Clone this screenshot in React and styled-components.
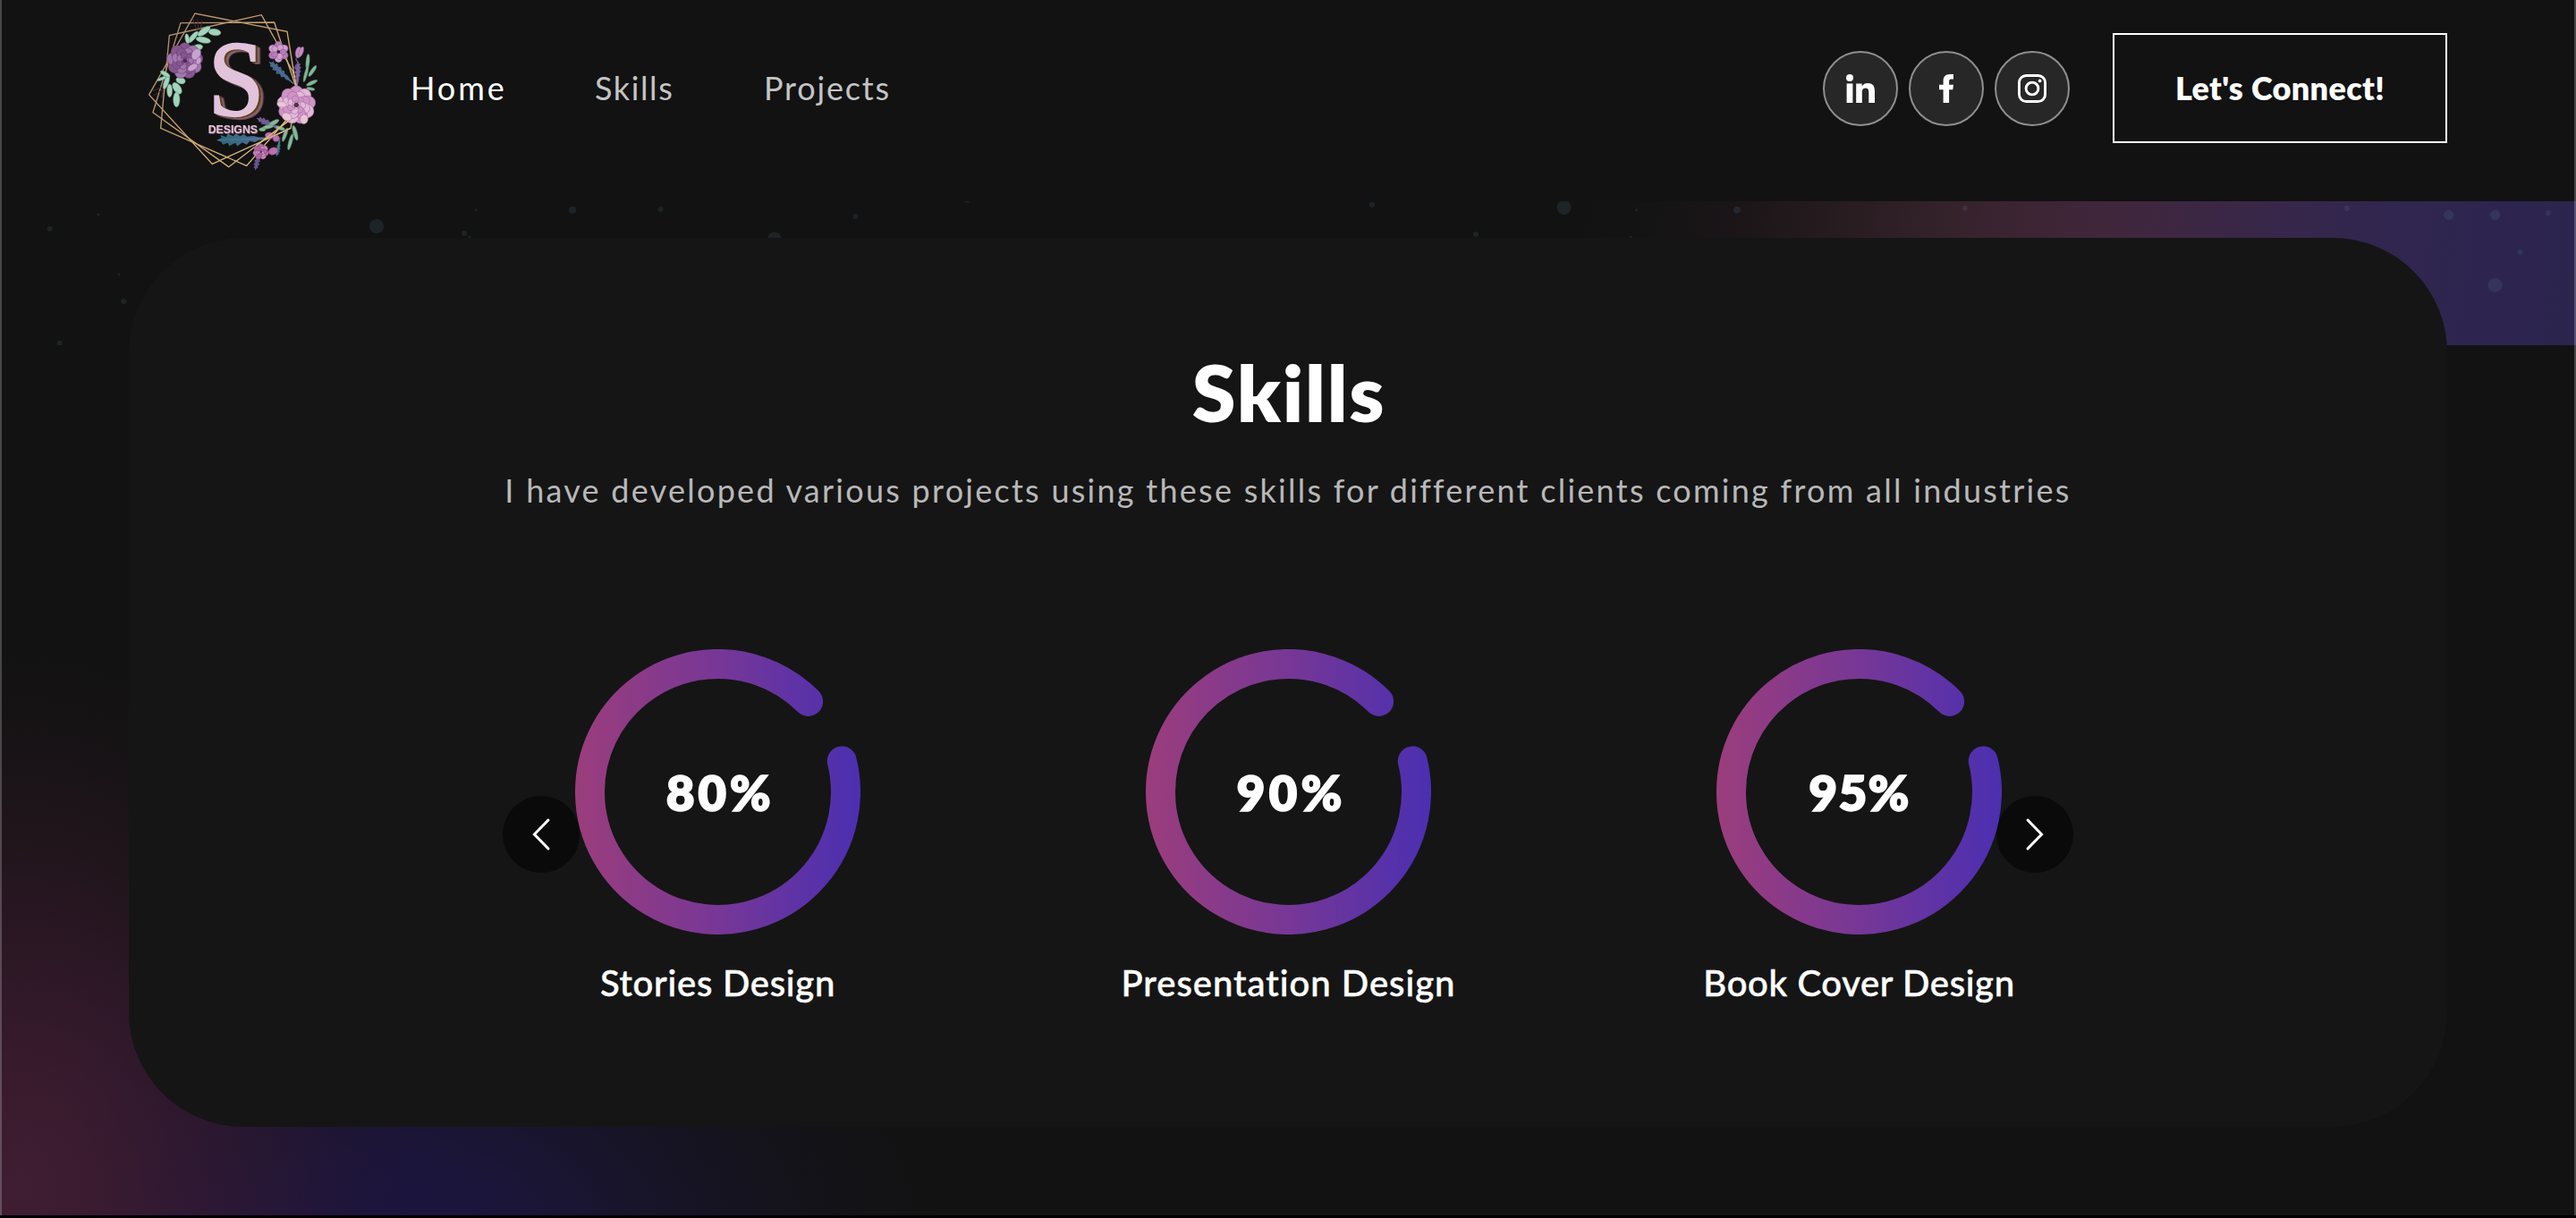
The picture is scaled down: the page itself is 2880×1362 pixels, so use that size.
import React from 'react';
import styled, { createGlobalStyle } from 'styled-components';

const GlobalStyle = createGlobalStyle`
  *, *::before, *::after { box-sizing: border-box; }
  html, body { margin: 0; padding: 0; background: #121212; }
  body { font-family: Lato, "Open Sans", sans-serif; color: #fff; overflow: hidden; }
`;

/* ---------- page ---------- */

const Page = styled.div`
  position: relative;
  width: 100%;
  height: 1362px;
  overflow: hidden;
  background: #121212;
  display: flex;
  flex-direction: column;
  border-bottom: 3px solid #000;
`;

const WindowEdge = styled.div`
  position: absolute;
  top: 0;
  bottom: 0;
  width: 2px;
  background: rgba(255, 255, 255, 0.22);
  ${(p) => (p.$right ? 'right: 0;' : 'left: 0;')}
`;

const BannerStrip = styled.div`
  position: absolute;
  left: 0;
  right: 0;
  top: 225px;
  height: 161px;
  background: linear-gradient(
    97deg,
    #121212 61%,
    #151415 64%,
    #1b1518 67%,
    #271c20 71%,
    #34222a 75%,
    #3c2433 78%,
    #40263a 81%,
    #392748 87%,
    #32264e 91%,
    #2d2550 96%,
    #2b244d 100%
  );
  svg { display: block; }
`;

const CornerGlow = styled.div`
  position: absolute;
  left: 0;
  bottom: 0;
  width: 1100px;
  height: 640px;
  background:
    radial-gradient(ellipse 440px 620px at 20px 610px,
      rgba(68, 30, 52, 0.9) 0%, rgba(66, 29, 50, 0.8) 20%, rgba(62, 27, 50, 0.6) 42%,
      rgba(58, 26, 44, 0.38) 62%, rgba(50, 24, 40, 0.15) 82%, rgba(40, 20, 30, 0) 100%),
    radial-gradient(ellipse 640px 430px at 410px 690px,
      rgba(28, 20, 66, 1) 0%, rgba(28, 21, 60, 0.95) 28%, rgba(26, 21, 50, 0.75) 50%,
      rgba(24, 20, 40, 0.42) 74%, rgba(20, 19, 26, 0) 100%);
`;

/* ---------- header ---------- */

const Header = styled.header`
  position: relative;
  flex: none;
  height: 225px;
  padding: 0 144px 28px 140px;
  display: flex;
  align-items: center;
  background: #121212;
`;

const LogoSvg = styled.svg`
  flex: none;
  width: 240px;
  height: 197px;
`;

const LogoLetter = styled.text`
  font: 400 365px "Liberation Serif", serif;
  fill: #e2c3dc;
  stroke: #e2c3dc;
  stroke-width: 7px;
  filter: drop-shadow(7px 3px 0 #5a4413) drop-shadow(8px 5px 0 #8f6277);
`;

const LogoWord = styled.text`
  font: 700 40px "Liberation Sans", sans-serif;
  fill: #e2c3dc;
  filter: drop-shadow(2px 2px 0 #8f6277);
`;

const Nav = styled.nav`
  display: flex;
  gap: 101px;
  margin-left: 79px;
  padding-bottom: 1px;
`;

const NavLink = styled.a`
  font-size: 36px;
  line-height: 44px;
  white-space: nowrap;
  width: ${(p) => p.$width}px;
  letter-spacing: ${(p) => p.$tracking}px;
  color: ${(p) => (p.$active ? '#fff' : '#c4c4c4')};
`;

const HeaderActions = styled.div`
  margin-left: auto;
  display: flex;
  align-items: center;
`;

const Socials = styled.div`
  display: flex;
  gap: 12px;
  margin-right: 48px;
`;

const SocialLink = styled.a`
  width: 84px;
  height: 84px;
  border-radius: 50%;
  display: grid;
  place-items: center;
  background: #272727;
  border: 2px solid #8f8f8f;
  svg { display: block; }
`;

const ConnectButton = styled.button`
  width: 374px;
  height: 123px;
  padding: 0 0 2px 0;
  border: 2px solid #fff;
  background: transparent;
  color: #fff;
  font-family: inherit;
  font-size: 36px;
  font-weight: 800;
  letter-spacing: 0.35px;
`;

/* ---------- skills ---------- */

const Card = styled.section`
  position: relative;
  flex: none;
  margin: 41px 144px 0;
  height: 994px;
  padding-top: 119px;
  border-radius: 128px;
  background: #151515;
  display: flex;
  flex-direction: column;
  align-items: center;
`;

const Title = styled.h2`
  margin: 0;
  padding-left: 2px;
  font-size: 88px;
  line-height: 106px;
  font-weight: 800;
  letter-spacing: 1.8px;
`;

const Subtitle = styled.p`
  margin: 35px 0 0;
  font-size: 36px;
  line-height: 44px;
  letter-spacing: 2.26px;
  white-space: nowrap;
  color: #b8b8b8;
`;

const Carousel = styled.div`
  position: relative;
  margin-top: 156px;
  width: 1756px;
  display: flex;
  justify-content: center;
`;

const Track = styled.div`
  flex: none;
  display: flex;
  width: 1915px;
  padding-left: 1px;
`;

const Skill = styled.div`
  position: relative;
  z-index: 1;
  flex: 1;
  display: flex;
  flex-direction: column;
  align-items: center;
`;

const Meter = styled.div`
  display: grid;
  width: 319px;
  height: 319px;
  > * { grid-area: 1 / 1; }
`;

const Percent = styled.span`
  align-self: center;
  justify-self: center;
  padding-left: ${(p) => p.$shift}px;
  padding-top: 1px;
  font-size: 55px;
  font-weight: 800;
  line-height: 66px;
  letter-spacing: ${(p) => p.$tracking}px;
  -webkit-text-stroke: 1.4px #fff;
`;

const SkillName = styled.h5`
  margin: 30px 0 0;
  font-size: 40px;
  line-height: 48px;
  font-weight: 500;
  white-space: nowrap;
  letter-spacing: ${(p) => p.$tracking}px;
  -webkit-text-stroke: 0.5px #fff;
`;

const ArrowButton = styled.button`
  position: absolute;
  top: 164px;
  ${(p) => (p.$next ? 'right: 0;' : 'left: 0;')}
  width: 86px;
  height: 86px;
  padding: 0;
  border: 0;
  border-radius: 50%;
  display: grid;
  place-items: center;
  background: #0a0a0a;
  svg { display: block; ${(p) => (p.$next ? 'transform: scaleX(-1);' : '')} }
`;

/* ---------- drawings ---------- */

function Flower({ x, y, r, light, mid, dark, core, petals = 8, layers = 3 }) {
  const fills = [mid, light, mid, light];
  return (
    <g transform={`translate(${x} ${y})`}>
      {Array.from({ length: layers }, (_, l) => {
        const k = 1 - l * 0.26;
        return Array.from({ length: petals - l }, (_, i) => (
          <ellipse
            key={`${l}-${i}`}
            cx={0}
            cy={-r * 0.58 * k}
            rx={r * 0.36 * k}
            ry={r * 0.4 * k}
            fill={fills[(l + (i % 2)) % 4]}
            stroke={dark}
            strokeWidth="1.6"
            transform={`rotate(${(360 / (petals - l)) * i + l * 21})`}
          />
        ));
      })}
      <circle r={r * 0.12} fill={core} />
    </g>
  );
}

function Leaves({ fill, stroke, items }) {
  return (
    <g fill={fill} stroke={stroke} strokeWidth="1.5">
      {items.map(([x, y, rx, ry, a], i) => (
        <ellipse key={i} cx={x} cy={y} rx={rx} ry={ry} transform={`rotate(${a} ${x} ${y})`} />
      ))}
    </g>
  );
}

const FROND =
  'M0 0 L16 -6 L14 -16 L32 -9 L36 -20 L54 -11 L62 -20 L76 -10 L88 -16 L98 -8 L118 -9 L135 -4 L165 -3 L165 3 L135 5 L122 11 L106 7 L96 18 L82 10 L66 22 L60 11 L40 20 L36 10 L20 15 L16 7 Z';

function Frond({ x, y, angle, scale, fill }) {
  return (
    <g transform={`translate(${x} ${y}) rotate(${angle}) scale(${scale})`}>
      <path d={FROND} fill={fill} />
      <path d="M4 0 L160 0" stroke="#8fa6c0" strokeOpacity="0.4" strokeWidth="2" />
    </g>
  );
}

function Logo() {
  return (
    <LogoSvg viewBox="0 0 720 591">
      <defs>
        <linearGradient id="gold" x1="0" y1="0" x2="1" y2="1">
          <stop offset="0" stopColor="#a98577" />
          <stop offset="0.45" stopColor="#c9a36d" />
          <stop offset="1" stopColor="#e3bf80" />
        </linearGradient>
        <linearGradient id="teal" x1="0" y1="0" x2="1" y2="0">
          <stop offset="0" stopColor="#2f6678" />
          <stop offset="1" stopColor="#4d6f9a" />
        </linearGradient>
      </defs>
      <Frond x={482} y={206} angle={42} scale={0.68} fill="#46648c" />
      <Frond x={580} y={205} angle={92} scale={0.55} fill="#7a5d9e" />
      <Frond x={306} y={470} angle={-2} scale={1.05} fill="url(#teal)" />
      <Frond x={440} y={396} angle={24} scale={0.6} fill="#6f5793" />
      <Frond x={436} y={572} angle={-78} scale={0.5} fill="#62508c" />
      <Frond x={508} y={525} angle={-80} scale={0.4} fill="#3f7488" />
      <g fill="none" stroke="url(#gold)" strokeWidth="4" strokeLinejoin="miter">
        <path d="M234 45 L80 318 L292 550 L555 430 L575 300 L543 106 Z" />
        <path d="M186 77 L93 377 L347 560 L548 405 L572 290 L500 75 Z" />
        <path d="M148 119 L119 430 L407 556 L590 345 L562 240 L457 50 Z" />
      </g>
      <g stroke="#4b2c31" strokeWidth="3" fill="none">
        <path d="M226 62 L240 100 M242 64 L246 100 M258 68 L250 104 M92 305 L130 290 M98 320 L136 292 M122 328 L130 280" />
      </g>
      <Leaves
        fill="#a3d3bb"
        stroke="#5f9a86"
        items={[
          [300, 108, 21, 11, 8], [264, 105, 25, 10, -35], [262, 134, 25, 10, 12], [228, 124, 24, 8, -50],
          [208, 130, 17, 7, -100], [243, 159, 17, 10, -10], [186, 270, 16, 11, 20], [174, 296, 12, 22, -35],
          [172, 334, 11, 25, 0], [149, 304, 9, 22, 0], [138, 276, 8, 24, 20], [134, 248, 18, 7, 30],
          [122, 264, 16, 5, -20],
        ]}
      />
      <Leaves
        fill="#86b698"
        stroke="#4f836b"
        items={[
          [612, 208, 6, 27, 5], [628, 238, 6, 22, 35], [626, 278, 20, 6, -25], [606, 248, 5, 28, 15],
          [622, 298, 14, 5, 10], [570, 446, 7, 26, -15], [554, 476, 6, 28, 15], [536, 452, 6, 24, 20],
          [498, 412, 20, 7, -30], [478, 426, 20, 6, -10], [460, 434, 11, 6, 0], [520, 430, 16, 6, 15],
        ]}
      />
      <Flower x={200} y={204} r={62} petals={9} layers={4} light="#a277ae" mid="#85578f" dark="#673d70" core="#4d2a59" />
      <Leaves fill="#c9a3d0" stroke="#8a5a96" items={[[238, 182, 14, 20, 30], [226, 226, 18, 10, -30], [246, 204, 8, 12, 20]]} />
      <Flower x={514} y={174} r={36} petals={6} layers={2} light="#d29fce" mid="#b87cba" dark="#8a5890" core="#33202f" />
      <path d="M572 196 L580 212 L566 228" stroke="#6b5a8e" strokeWidth="4" fill="none" />
      <Leaves fill="#c48ac4" stroke="#8d5391" items={[[581, 176, 10, 19, 10], [590, 174, 7, 18, 20]]} />
      <Flower x={574} y={352} r={66} petals={9} layers={4} light="#e4b8d8" mid="#cd94c5" dark="#a268a0" core="#4a3340" />
      <Leaves fill="#eac6d4" stroke="#a96f9d" items={[[600, 400, 13, 16, 10], [542, 392, 17, 13, 30], [525, 350, 16, 10, 10]]} />
      <Flower x={455} y={509} r={27} petals={7} layers={3} light="#d28dc0" mid="#b46ba8" dark="#84477f" core="#6b3268" />
      <Leaves fill="#bd70ac" stroke="#82427c" items={[[496, 507, 16, 12, -20], [484, 455, 15, 11, 10], [506, 464, 11, 11, 0]]} />
      <path d="M555 430 L470 468 M548 405 L440 488" stroke="#dfba7c" strokeWidth="4" />
      <LogoLetter x="278" y="387" textLength="188" lengthAdjust="spacingAndGlyphs">S</LogoLetter>
      <LogoWord x="278" y="446" textLength="166" lengthAdjust="spacingAndGlyphs">DESIGNS</LogoWord>
    </LogoSvg>
  );
}

const LinkedInIcon = () => (
  <svg width="32" height="32" viewBox="0 0 32 32" fill="#fff">
    <circle cx="4" cy="4" r="4" />
    <path d="M0.6 10.4h6.8V32H0.6z" />
    <path d="M11.2 10.4h6.4v3c1-1.9 3.4-3.5 6.6-3.5C30.8 9.9 32 14.2 32 19.9V32h-6.7V21.3c0-2.6 0-5.9-3.5-5.9s-4 2.8-4 5.6V32h-6.6z" />
  </svg>
);

const FacebookIcon = () => (
  <svg width="16" height="32" viewBox="0 0 16 32" fill="#fff">
    <path d="M16 0v5.4h-2.4c-2 0-2.5 1-2.5 2.5v3.9H16l-.7 5.5h-4.2V32H4.6V17.3H0v-5.5h4.6V7.4C4.6 2.7 7.2 0 11.9 0z" />
  </svg>
);

const InstagramIcon = () => (
  <svg width="32" height="32" viewBox="0 0 32 32" fill="none" stroke="#fff" strokeWidth="2.9">
    <rect x="1.45" y="1.45" width="29.1" height="29.1" rx="8" />
    <circle cx="16" cy="16" r="6.9" />
    <circle cx="24.6" cy="7.4" r="1.9" fill="#fff" stroke="none" />
  </svg>
);

const Chevron = () => (
  <svg width="30" height="44" viewBox="0 0 30 44" fill="none" stroke="#fff" strokeWidth="3" strokeLinecap="round">
    <path d="M23 6L7.4 22L23 38" />
  </svg>
);

const Ring = () => (
  <svg width="319" height="319" viewBox="0 0 319 319">
    <defs>
      <linearGradient id="ring" gradientUnits="userSpaceOnUse" x1="0" y1="0" x2="319" y2="0">
        <stop offset="0" stopColor="#9b3d7c" />
        <stop offset="0.5" stopColor="#773796" />
        <stop offset="0.82" stopColor="#5a32a8" />
        <stop offset="1" stopColor="#4b2fb0" />
      </linearGradient>
    </defs>
    <path
      d="M260.62 58.38 A143 143 0 1 0 298.25 124.9"
      fill="none"
      stroke="url(#ring)"
      strokeWidth="33"
      strokeLinecap="round"
    />
  </svg>
);

const STARS = [
  [55.7, 255.7, 3], [110, 240, 1.7], [421, 253, 8], [532, 234.7, 1.5], [640, 234.7, 4], [738.5, 234, 3],
  [519, 261, 3], [525, 265, 1.4], [866, 267.5, 8], [956.5, 242, 3], [133, 307, 1.5], [138.4, 337, 3],
  [66.7, 384, 3], [1081, 222.5, 4], [1534, 229, 3], [1650, 262, 3], [1748.5, 232, 8], [1829.5, 234.7, 1.5],
  [1823, 265, 1.5], [1942, 234.7, 4], [2196.7, 232.7, 3], [2624, 233, 3], [2737.8, 240.3, 5.5],
  [2789.7, 240.3, 5.5], [2849, 238, 3], [2817.5, 282, 3], [2789.7, 318.7, 8],
];

const Starfield = () => (
  <svg width="2880" height="161" viewBox="0 225 2880 161" fill="#6db6dc" fillOpacity="0.11">
    {STARS.map(([x, y, r]) => (
      <circle key={`${x}-${y}`} cx={x} cy={y} r={r} />
    ))}
  </svg>
);

/* ---------- content ---------- */

const LINKS = [
  { label: 'Home', width: 105, tracking: 2.9, active: true },
  { label: 'Skills', width: 88, tracking: 1.6 },
  { label: 'Projects', width: 142, tracking: 1.8 },
];

const SKILLS = [
  { value: '80%', name: 'Stories Design', tracking: 3.6, shift: 5, nameTracking: 0.75 },
  { value: '90%', name: 'Presentation Design', tracking: 4, shift: 6, nameTracking: 1 },
  { value: '95%', name: 'Book Cover Design', tracking: 1.2, shift: 1, nameTracking: 0.65 },
];

export default function App() {
  return (
    <Page>
      <GlobalStyle />
      <BannerStrip><Starfield /></BannerStrip>
      <CornerGlow />
      <Header>
        <Logo />
        <Nav>
          {LINKS.map((l) => (
            <NavLink key={l.label} $active={l.active} $width={l.width} $tracking={l.tracking}>{l.label}</NavLink>
          ))}
        </Nav>
        <HeaderActions>
          <Socials>
            <SocialLink><LinkedInIcon /></SocialLink>
            <SocialLink><FacebookIcon /></SocialLink>
            <SocialLink><InstagramIcon /></SocialLink>
          </Socials>
          <ConnectButton>Let's Connect!</ConnectButton>
        </HeaderActions>
      </Header>
      <Card>
        <Title>Skills</Title>
        <Subtitle>
          I have developed various projects using these skills for different clients coming from all industries
        </Subtitle>
        <Carousel>
          <ArrowButton aria-label="Previous"><Chevron /></ArrowButton>
          <Track>
            {SKILLS.map((s) => (
              <Skill key={s.name}>
                <Meter>
                  <Ring />
                  <Percent $shift={s.shift} $tracking={s.tracking}>{s.value}</Percent>
                </Meter>
                <SkillName $tracking={s.nameTracking}>{s.name}</SkillName>
              </Skill>
            ))}
          </Track>
          <ArrowButton $next aria-label="Next"><Chevron /></ArrowButton>
        </Carousel>
      </Card>
      <WindowEdge />
      <WindowEdge $right />
    </Page>
  );
}
